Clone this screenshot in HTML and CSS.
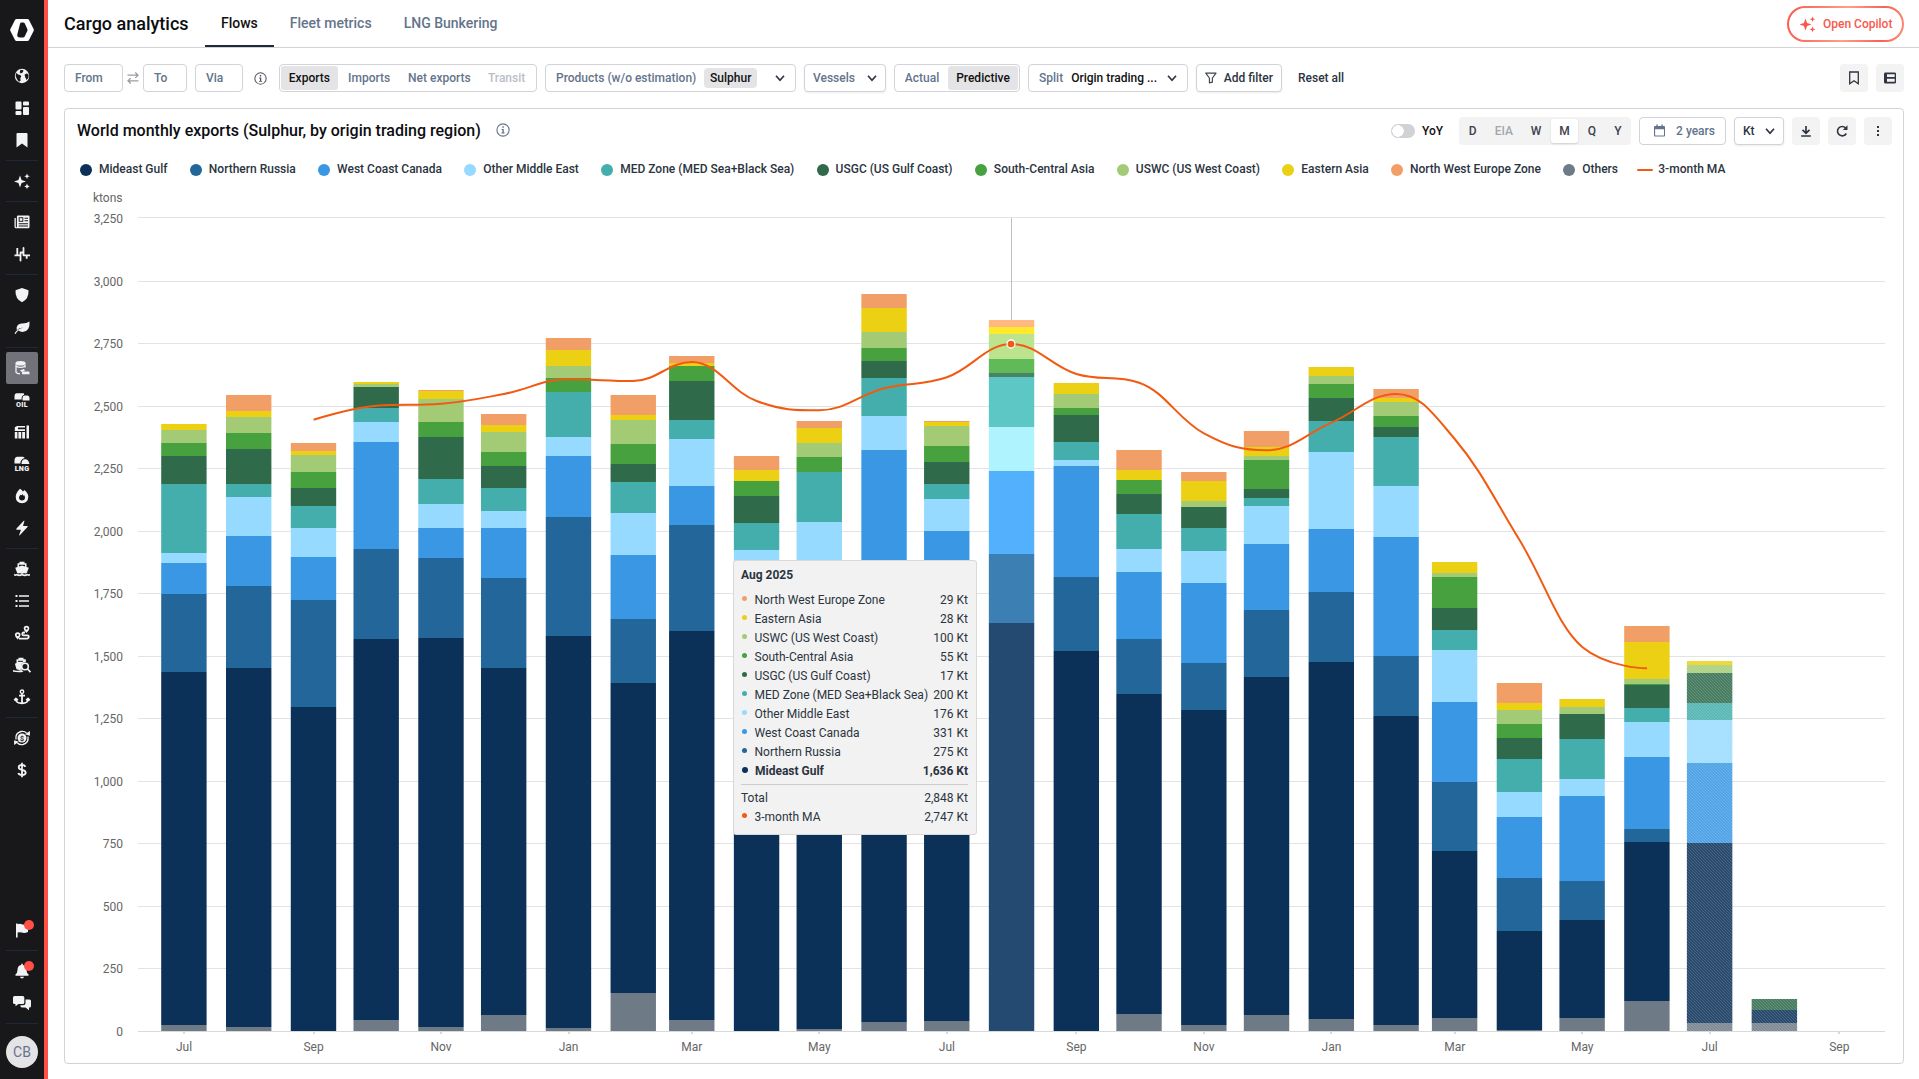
FILE: index.html
```html
<!DOCTYPE html>
<html lang="en">
<head>
<meta charset="utf-8">
<title>Cargo analytics</title>
<link rel="stylesheet" href="styles.css">
</head>
<body>
<svg class="sprite" aria-hidden="true">
  <symbol id="i-chevron" viewBox="0 0 10 10"><path d="M1 2.8 5 7.2 9 2.8" fill="none" stroke="currentColor" stroke-width="1.7"/></symbol>
  <symbol id="i-info" viewBox="0 0 14 14"><circle cx="7" cy="7" r="6.100" fill="none" stroke="currentColor" stroke-width="1.1"/><path d="M6.300 3.300h1.500v1.500H6.300zM5.600 6h2.200v3.600h.8v1H5.400v-1h1V7h-.8z" fill="currentColor"/></symbol>
  <symbol id="i-sparkles" viewBox="0 0 16 16"><path d="M6 2.6 7.6 6.9 12 8.5 7.6 10.1 6 14.4 4.4 10.1 0 8.5 4.4 6.9zM13 .4l.8 2 2 .8-2 .8-.8 2-.8-2-2-.8 2-.8zM13 10.6l.8 2 2 .8-2 .8-.8 2-.8-2-2-.8 2-.8z" fill="currentColor"/></symbol>
</svg>
<div class="app">
  <nav class="side">
    <a class="logo"><svg width="24" height="22" viewBox="0 0 24 22"><path fill="#fff" fill-rule="evenodd" d="M6.500 0H17.500Q18.500 0 19 .9L23.600 9.900Q24.100 11 23.600 12.100L19 21.100Q18.500 22 17.500 22H6.500Q5.500 22 5 21.100L.4 12.100Q-.1 11 .4 9.900L5 .9Q5.500 0 6.500 0zM11.500 3.500Q10.500 3.500 10.100 4.500L7.300 15.500Q7 16.800 7.800 17.700 8.500 18.500 9.500 18.500H13Q14.200 18.500 14.700 17.500L17.300 12Q17.700 11 17.300 10L14.800 4.500Q14.300 3.500 13.200 3.500z"/></svg></a>
    <a class="item"><svg class="ic" viewBox="0 0 16 16"><circle cx="8" cy="8" r="7.200"/><path class="cut" d="M2.300 4.800 4 6.500l2.300.4 1 1.500-1 1.600.3 2.800-1.700 1L3 11.300 1.600 8zM6.500 1.800l3 .5-.6 1.900-2 1.300-1.200-1.200zM10.500 6.800l2.500-1.500 1.700 2-.4 2.800-1.700 1.800-1.300-2.400z"/></svg></a>
    <a class="item"><svg class="ic" viewBox="0 0 16 16"><rect x="1.500" y="1.500" width="6" height="8" rx="1"/><rect x="9" y="1.500" width="6" height="4" rx="1"/><rect x="1.500" y="11" width="6" height="4" rx="1"/><rect x="9" y="7" width="6" height="8" rx="1"/></svg></a>
    <a class="item"><svg class="ic" viewBox="0 0 16 16"><path d="M2.500 2Q2.500 1 3.500 1h9q1 0 1 1v13.500L8 11.500l-5.500 4z"/></svg></a>
    <hr>
    <a class="item"><svg class="ic"><use href="#i-sparkles"/></svg></a>
    <hr>
    <a class="item"><svg class="ic" viewBox="0 0 16 16"><path d="M4 1.500h10.500q1 0 1 1V13q0 1.200-1.200 1.200H2Q.5 14.200.5 12.700V4H1.800v8.700q0 .5.500.5t.600-.5V2.500q0-1 1.100-1z"/><path class="cut" d="M4.700 3.300h4.600v4.500H4.700zM10.500 3.800H14v1h-3.500zM10.500 6.300H14v1h-3.500zM4.700 9.300H14v.9H4.700zM4.700 11.600H14v.9H4.700z"/><path d="M5.600 4.200h2.800v2.600H5.600z"/></svg></a>
    <a class="item"><svg class="ic" viewBox="0 0 16 16"><path class="ln" d="M.5 9.300H4M3.300 9.600V2M3.300 9.300h3.200v5.200V6.500h3V2v7.300h3.200v3.500M12.700 9.300H16"/></svg></a>
    <hr>
    <a class="item"><svg class="ic" viewBox="0 0 16 16"><path d="M8 1l6.500 2.300Q15 12 8 15.300 1 12 1.500 3.300z"/></svg></a>
    <a class="item"><svg class="ic" viewBox="0 0 16 16"><path d="M15.500 2.500Q16.300 12.500 8.500 13 6 13 4.500 11.600 2.500 13 1.700 15L.5 14.500Q2.500 10 9.500 8.500 5 8.500 2.800 11 1.500 5.500 7.300 4.400 12.500 4.600 15.500 2.500z"/></svg></a>
    <hr>
    <a class="item active"><svg class="ic" viewBox="0 0 16 16"><ellipse cx="6.500" cy="3.300" rx="5" ry="2.300"/><path class="ln thin" d="M2 4.500V12.300q1 1.300 4 1.500M11 4.500V7.500M2.200 6.300q4.300 2 8.600 0"/><path d="M6 10.300l4-1.300 1 1.500-3.500 1.500zM8 12.500q0-1 1-1h5.500q1 0 1 1v1.800H8z"/></svg></a>
    <a class="item"><svg class="ic" viewBox="0 0 16 16"><path d="M2.500 1.300h7.300l.4 1.500Q8 3.300 7.600 5.500V7.500H.5V4Q.5 1.300 2.500 1.300zM10.500 3.500h3Q15.500 3.500 15.500 6v2.500H8.500V6Q8.500 3.500 10.500 3.500z"/><text x="8" y="15.300" class="ict">OIL</text></svg></a>
    <a class="item"><svg class="ic" viewBox="0 0 16 16"><path d="M.8 3.300 3 2h8v1.500H4v1.700h7V7H.8zM.8 8h2.600v6.500H.8zM4.400 8h2.800v6.500H4.400zM8.200 8H11v6.500H8.200zM12.500 1.500H15v13h-2.500z"/></svg></a>
    <a class="item"><svg class="ic" viewBox="0 0 16 16"><path d="M3.500 .8h5.500q1.200.2 1.700 1.200Q6.500 3 6.300 7.500H.5V4.500Q.5 1 3.500.8zM7.500 8Q7.500 3.500 11 3.300T15.500 8z"/><text x="8" y="15.300" class="ict">LNG</text></svg></a>
    <a class="item"><svg class="ic" viewBox="0 0 16 16"><path fill-rule="evenodd" d="M6 .8Q8 2 9 3.600L10.500 2Q14.500 5.500 14.300 9 14 15 8 15.200 2 15 1.700 9 1.700 5 6 .8zM8.500 6Q7.500 8 6.500 6.800 5 8.300 5 9.800 5.200 12.500 8 12.500T11 9.800Q11 8 10 7L9.500 8z"/></svg></a>
    <a class="item"><svg class="ic" viewBox="0 0 16 16"><path d="M10.500.8 9 6h4.300q.8.300.2 1L5.800 15.300q-.8.300-.6-.6L7 9.700H2.700q-.8-.3-.2-1.100L9.800.8z"/></svg></a>
    <hr>
    <a class="item"><svg class="ic" viewBox="0 0 16 16"><path d="M5.500.8h5v1.400h2V6l2.300.8-2 5.200q-1.500 1-2.400 0-2.400 1.400-4.800 0-.9 1-2.400 0l-2-5.200L3.500 6V2.200h2zM0 12.800q1.500 1 2.700 0 2.600 1.500 5.300 0 2.700 1.500 5.300 0 1.200 1 2.700 0v1.700q-1.500.8-2.700 0-2.600 1.300-5.300 0-2.700 1.300-5.300 0-1.200.8-2.700 0z"/><path class="cut" d="M5 3.800h6v1.600L8 4.600 5 5.400z"/></svg></a>
    <a class="item"><svg class="ic" viewBox="0 0 16 16"><path d="M1.500 2h2v2h-2zM1.500 7h2v2h-2zM1.500 12h2v2h-2zM5 2.300h10v1.500H5zM5 7.300h10v1.500H5zM5 12.300h10v1.500H5z"/></svg></a>
    <a class="item"><svg class="ic" viewBox="0 0 16 16"><path fill-rule="evenodd" d="M12.500.8Q15.300.8 15.300 3.500 15.300 5 12.500 8 9.700 5 9.700 3.500 9.700.8 12.500.8zM12.500 2.400a1.100 1.100 0 1 0 .1 0zM3.700 7.300q2.800 0 2.800 2.700 0 1.500-2.800 4.500Q.9 11.500.9 10 .9 7.300 3.700 7.300zM3.700 8.900a1.100 1.100 0 1 0 .1 0z"/><path class="ln" d="M11 7.500H9.800Q8.300 7.500 8.300 9t1.500 1.300h3.500q1.500 0 1.500 1.500t-1.500 1.800H5"/></svg></a>
    <a class="item"><svg class="ic wide" viewBox="0 0 18 16"><path d="M5.500.8h5v1.400h2.300V5Q7.500 5.500 8 10l1.500 2.500-3 .5-3-.8-1.600-5.400L3.500 6V2.200h2zM0 13q4 1.500 8.500 0l2 1.500-2 .7Q4 15.500 0 14.800z"/><path class="cut" d="M5 3.800h5v1H5z"/><circle cx="12" cy="9.500" r="3.300" fill="none" stroke="#f2f3f5" stroke-width="1.600"/><path class="ln" d="m14.500 12 3 3.200"/></svg></a>
    <a class="item"><svg class="ic" viewBox="0 0 16 16"><circle cx="8" cy="2.700" r="1.700" fill="none" stroke="#f2f3f5" stroke-width="1.400"/><path class="ln" d="M8 4.400V14M5 6.700h6M1.500 10q.5 4.300 6.500 4.300t6.500-4.300M.3 11.500l1.500-2 2 1.700M15.700 11.500l-1.500-2-2 1.700"/></svg></a>
    <hr>
    <a class="item"><svg class="ic" viewBox="0 0 16 16"><circle cx="8" cy="8" r="4.500"/><path class="ln thin" d="M2 9.500Q1 3 7 1.500q3.500-.6 5.500 1.500M14 6.500Q15 13 9 14.500q-3.500.6-5.500-1.500"/><path d="M11 4.300 15.900 1v4.800zM5 11.700.1 15v-4.800z"/><text x="8" y="10.700" class="coin">$</text></svg></a>
    <a class="item"><svg class="ic" viewBox="0 0 16 16"><path class="ln" d="M8 .8v14.400M11.500 4.700Q10.500 3 8 3 4.700 3 4.700 5.300q0 2 3.300 2.600 3.700.6 3.700 2.900Q11.700 13 8 13q-3 0-3.700-2"/></svg></a>
    <div class="grow"></div>
    <a class="item"><svg class="ic" viewBox="0 0 16 16"><path d="M2 1.500h1.600v.7q2-1 4.300 0T12.500 2q1-.3 1.500.5V10q-3.500 1.500-6.300.5-2.200-.7-4.100 0v5H2z"/></svg><i class="badge"></i></a>
    <hr>
    <a class="item"><svg class="ic" viewBox="0 0 16 16"><path d="M7.200.8h1.600v1.100q3.700.6 3.700 5 0 3 2 4.300v1.600h-13v-1.600q2-1.300 2-4.300 0-4.400 3.700-5zM6 13.700h4q-.3 1.700-2 1.700t-2-1.700z"/></svg><i class="badge"></i></a>
    <a class="item"><svg class="ic wide" viewBox="0 0 18 16"><path d="M1.500 1h8.300q1.500 0 1.500 1.500v5q0 1.500-1.500 1.500H5.500L2.500 11.300V9h-1Q0 9 0 7.500v-5Q0 1 1.500 1zM12.500 4.500h4q1.500 0 1.500 1.500v5q0 1.500-1.500 1.500H16v2.700l-3.500-2.700H9Q7.300 12.500 7.300 10.300H10q2.500 0 2.500-2.500z"/></svg></a>
    <hr>
    <span class="avatar">CB</span>
  </nav>

  <main>
    <header class="top">
      <h1>Cargo analytics</h1>
      <a class="tab on">Flows</a><a class="tab">Fleet metrics</a><a class="tab">LNG Bunkering</a>
      <button class="copilot"><svg width="17" height="16"><use href="#i-sparkles"/></svg>Open Copilot</button>
    </header>

    <div class="filters">
      <div class="box from">From</div>
      <svg class="swap" viewBox="0 0 12 12"><path d="M.5 3.200H11M8.300.5 11 3.200 8.300 5.900M11.500 8.800H1M3.700 6.100 1 8.800l2.700 2.700" fill="none" stroke="#9a9da3" stroke-width="1.300"/></svg>
      <div class="box to">To</div>
      <div class="box via">Via</div>
      <svg class="info"><use href="#i-info"/></svg>
      <div class="seg mode"><b>Exports</b><span>Imports</span><span>Net exports</span><span class="off">Transit</span></div>
      <div class="box products">Products (w/o estimation)<em>Sulphur</em><svg class="chev"><use href="#i-chevron"/></svg></div>
      <div class="box vessels sh">Vessels<svg class="chev"><use href="#i-chevron"/></svg></div>
      <div class="seg pred"><span>Actual</span><b>Predictive</b></div>
      <div class="box split">Split<strong>Origin trading ...</strong><svg class="chev"><use href="#i-chevron"/></svg></div>
      <div class="box addf sh"><svg width="12" height="12" viewBox="0 0 12 12"><path d="M.8 1h10.400L7.500 6v4.200L4.500 11V6z" fill="none" stroke="#3f4650" stroke-width="1.200" stroke-linejoin="round"/></svg>Add filter</div>
      <span class="reset">Reset all</span>
      <div class="sq first"><svg viewBox="0 0 12 14"><path d="M1.700 1h8.600v11.700L6 9.800l-4.300 2.900z" fill="none" stroke="#2f3540" stroke-width="1.300"/></svg></div>
      <div class="sq"><svg viewBox="0 0 12 14"><path fill-rule="evenodd" d="M1.500 1.500h9q1.500 0 1.500 1.300v8.400q0 1.300-1.500 1.300h-9Q0 12.500 0 11.200V2.800Q0 1.500 1.500 1.500zM3 3.300v2.800h7.700V3.300zM3 7.700v3h7.700v-3z" fill="#2f3540"/></svg></div>
    </div>

    <section class="card">
      <div class="head">
        <h2>World monthly exports (Sulphur, by origin trading region)</h2>
        <svg class="info"><use href="#i-info"/></svg>
        <i class="toggle"></i><span class="yoy">YoY</span>
        <div class="gran"><span>D</span><span class="off">EIA</span><span>W</span><b>M</b><span>Q</span><span>Y</span></div>
        <div class="box date"><svg width="12" height="14" viewBox="0 0 12 14"><path fill-rule="evenodd" d="M2.500 0H4v1.600h4V0h1.500v1.600H11q1 0 1 1V12q0 1-1 1H1q-1 0-1-1V2.600q0-1 1-1h1.500zM1.200 5v6.800h9.600V5z" fill="#64748b"/></svg>2 years</div>
        <div class="box kt sh">Kt<svg class="chev"><use href="#i-chevron"/></svg></div>
        <div class="sq"><svg viewBox="0 0 12 14"><path d="M6 2v7M2.500 5.800 6 9.300l3.500-3.500M1.200 12h9.600" fill="none" stroke="#2f3540" stroke-width="1.700"/></svg></div>
        <div class="sq"><svg viewBox="0 0 12 14"><path d="M10.300 9.500A4.700 4.700 0 1 1 9.700 4" fill="none" stroke="#2f3540" stroke-width="1.600"/><path d="M11.500 1.300V6H6.800z" fill="#2f3540"/></svg></div>
        <div class="sq"><svg viewBox="0 0 12 14"><path d="M5 2h2v2H5zM5 6h2v2H5zM5 10h2v2H5z" fill="#2f3540"/></svg></div>
      </div>
      <ul class="legend" id="legend"></ul>
      <div class="plot">
        <svg id="chart" width="1838" height="882" viewBox="65 181 1838 882"></svg>
        <div class="tip">
          <h3>Aug 2025</h3>
          <div id="tiprows"></div>
          <div class="sum"><p>Total<span>2,848 Kt</span></p><p><i class="ma"></i>3-month MA<span>2,747 Kt</span></p></div>
        </div>
      </div>
    </section>
  </main>
</div>
<script src="chart.js"></script>
</body>
</html>
```
FILE: styles.css
```css
* { box-sizing: border-box; }
body { margin: 0; background: #fff; color: #2b3440; font: 500 12px/16px Roboto, sans-serif; overflow: hidden; }
h1, h2, h3, p, ul { margin: 0; padding: 0; }
h1, h2 { font-weight: 500; }
.sprite { position: absolute; width: 0; height: 0; }
.app { display: flex; height: 1079px; }

.side { width: 48px; flex: none; background: #18181b; border-right: 4px solid #ff4f47; display: flex; flex-direction: column; padding: 19px 6px 11px; }
.logo { height: 41px; padding-left: 4px; }
.logo svg { display: block; margin-left: -.5px; }
.item { height: 32px; width: 32px; flex: none; display: flex; align-items: center; justify-content: center; border-radius: 2px; position: relative; color: #f2f3f5; }
.item.active { background: #72727b; }
.side hr { width: 32px; height: 1px; flex: none; border: 0; background: #1e2a3b; margin: 4px 0; }
.ic { width: 16px; height: 16px; fill: #f2f3f5; overflow: visible; }
.ic.wide { width: 18px; }
.ic .cut { fill: #18181b; }
.ic .ln { fill: none; stroke: #f2f3f5; stroke-width: 1.800; stroke-linejoin: round; }
.ic .thin { stroke-width: 1.300; }
.ict { font: 900 7.200px Roboto, sans-serif; text-anchor: middle; letter-spacing: .3px; }
.coin { font: 700 7px Roboto, sans-serif; text-anchor: middle; fill: #18181b; }
.grow { flex: 1; }
.badge { position: absolute; right: 4px; top: 6px; width: 10px; height: 10px; border-radius: 50%; background: #ff4f47; }
.avatar { width: 32px; height: 32px; flex: none; margin-top: 8px; border-radius: 50%; background: #e4e4e7; color: #64748b; font: 400 14px/32px Roboto, sans-serif; text-align: center; }

main { flex: 1; min-width: 0; }
.top { height: 48px; border-bottom: 1px solid #d2d3d7; padding: 0 15px 0 16px; display: flex; align-items: center; }
h1 { font-size: 18px; line-height: 24px; color: #0c0d10; margin-right: 16px; width: 125px; white-space: nowrap; }
.tab { height: 47px; padding: 0 16px; font-size: 14px; line-height: 47px; color: #64748b; }
.tab.on { color: #111; border-bottom: 2px solid #1e293b; }
.copilot { margin-left: auto; width: 117px; height: 36px; margin-top: 1px; border: 2px solid transparent; border-radius: 18px; background: linear-gradient(#fff, #fff) padding-box, linear-gradient(100deg, #f9594f, #ff9f83 50%, #f86257 80%, #ff8b74) border-box; color: #f9584e; font: 500 12px Roboto, sans-serif; display: flex; align-items: center; padding: 0 0 0 10px; gap: 7px; white-space: nowrap; }

.filters { height: 60px; display: flex; align-items: center; padding: 0 15px 0 16px; color: #64748b; }
.box { height: 28px; border: 1px solid #d2d3d7; border-radius: 4px; background: #fff; display: flex; align-items: center; padding: 0 10px; white-space: nowrap; flex: none; }
.sh { box-shadow: 0 1px 2px rgba(0, 0, 0, .08); }
.chev { width: 10px; height: 10px; margin-left: auto; color: #2f3540; }
.from { width: 59px; }
.swap { width: 12px; height: 12px; margin: 0 4px 0 4px; }
.to { width: 44px; }
.via { width: 48px; margin-left: 8px; }
.info { width: 14px; height: 14px; color: #4b525c; flex: none; }
.filters .info { width: 13px; height: 13px; margin: 0 12px 0 11px; }
.seg { height: 28px; border: 1px solid #d2d3d7; border-radius: 4px; display: flex; padding: 1px; line-height: 24px; flex: none; white-space: nowrap; }
.seg b { background: #e4e4e7; border-radius: 3px; color: #111; font-weight: 500; text-align: center; }
.seg span { text-align: center; }
.seg .off { color: #b9bec6; }
.mode { width: 258px; }
.mode > :nth-child(1) { width: 57px; }
.mode > :nth-child(2) { width: 63px; }
.mode > :nth-child(3) { width: 78px; }
.mode > :nth-child(4) { width: 57px; }
.products { width: 251px; margin-left: 8px; padding-right: 10px; }
.products em { font-style: normal; background: #e4e4e7; border-radius: 4px; color: #111; height: 20px; line-height: 20px; width: 53px; text-align: center; margin-left: 8px; }
.vessels { width: 82px; margin-left: 8px; padding: 0 8px; }
.pred { width: 126px; margin-left: 8px; }
.pred span { width: 52px; }
.pred b { flex: 1; }
.split { width: 160px; margin-left: 8px; }
.split strong { font-weight: 500; color: #111; margin-left: 8px; }
.addf { width: 86px; margin-left: 8px; padding: 0 8px; color: #2b3440; gap: 7px; }
.reset { margin-left: 16px; color: #2b3440; }
.sq { width: 28px; height: 28px; flex: none; border-radius: 4px; background: #f3f3f4; display: flex; align-items: center; justify-content: center; margin-left: 8px; }
.sq svg { width: 12px; height: 14px; }
.sq.first { margin-left: auto; }

.card { margin: 0 15px 0 16px; height: 956px; border: 1px solid #d2d3d7; border-radius: 4px; display: flex; flex-direction: column; }
.head { height: 44px; flex: none; display: flex; align-items: center; padding: 0 11px 0 12px; }
h2 { font-size: 16px; line-height: 20px; color: #0c0d10; margin-right: 15px; white-space: nowrap; }
.head > .info { margin-top: -3px; color: #64748b; }
.toggle { margin-left: auto; width: 24px; height: 14px; border-radius: 7px; background: radial-gradient(circle at 7px 7px, #fff 5.500px, transparent 6px) #d1d1d6; }
.yoy { margin: 0 16px 0 7px; color: #111; width: 21px; }
.gran { width: 172px; height: 28px; background: #f3f3f4; border-radius: 4px; display: flex; align-items: center; color: #3b424d; }
.gran > * { text-align: center; flex: none; font-weight: 500; }
.gran .off { width: 34.500px; color: #a4a7ad; }
.gran > :nth-child(1) { width: 27.500px; }
.gran > :nth-child(3) { width: 30px; }
.gran b { width: 27px; height: 24px; line-height: 24px; background: #fff; border-radius: 3px; box-shadow: 0 1px 2px rgba(0, 0, 0, .15); }
.gran > :nth-child(5) { width: 28px; }
.gran > :nth-child(6) { width: 24px; }
.date { width: 87px; margin-left: 8px; color: #64748b; padding-left: 14px; gap: 11px; }
.kt { width: 50px; margin-left: 8px; padding: 0 8px; color: #2b3440; }

.legend { height: 28px; flex: none; list-style: none; display: flex; padding: 8px 0 0 15px; gap: 22.300px; line-height: 17px; align-items: flex-start; }
.legend li { display: flex; align-items: center; gap: 7px; white-space: nowrap; }
.legend i { width: 12px; height: 12px; border-radius: 50%; }
.legend i.dash { width: 16px; height: 2px; border-radius: 1px; background: #f15a10; margin: 0 -2px 0 -3px; }
.plot { position: relative; flex: 1; }
#chart { display: block; font: 400 12px Roboto, sans-serif; fill: #666; }
.end { text-anchor: end; }
.mid { text-anchor: middle; }

.tip { position: absolute; left: 668px; top: 379px; width: 244px; height: 275px; background: #f2f2f2; border: 1px solid #d9d9d9; border-radius: 3px; padding: 6px 8px 0 7px; font-weight: 400; }
.tip h3 { font-weight: 700; font-size: 12px; line-height: 16px; margin-bottom: 7px; }
.tip p { display: flex; align-items: center; height: 19px; white-space: nowrap; }
.tip p i { width: 5px; height: 5px; border-radius: 50%; margin: 0 7.500px 3px 1px; }
.tip p span { margin-left: auto; }
.tip p.cur { font-weight: 700; }
.tip p.cur i { width: 6px; height: 6px; margin: 0 7px 2px 1px; }
.tip .ma { background: #f15a10; }
.sum { border-top: 1px solid #ccc; margin-top: 4px; padding-top: 3px; }
```
FILE: chart.js
```js
const series = [
  ['North West Europe Zone', '#F29F67', '29'], ['Eastern Asia', '#EBD014', '28'],
  ['USWC (US West Coast)', '#A3CB75', '100'], ['South-Central Asia', '#48A13F', '55'],
  ['USGC (US Gulf Coast)', '#2F6B4B', '17'], ['MED Zone (MED Sea+Black Sea)', '#44AEAC', '200'],
  ['Other Middle East', '#96DAFF', '176'], ['West Coast Canada', '#3A97E3', '331'],
  ['Northern Russia', '#22669A', '275'], ['Mideast Gulf', '#0B3158', '1,636'], ['Others', '#6E7B87']
];
const BASE = 1031;
// Top edge of every stacked segment, in the order of `series`; 0 = no segment.
const bars = [
  [0,424,430,443,456,484,553,563,594,672,1025],
  [395,411,417,433,449,484,497,536,586,668,1027],
  [443,451,455,472,488,506,528,557,600,707,0],
  [0,382,384,0,387,408,422,442,549,639,1020],
  [390,391,399,422,437,479,504,528,558,638,1027],
  [414,425,432,452,466,488,511,528,578,668,1015],
  [338,350,366,378,0,392,437,456,517,636,1028],
  [395,415,420,444,464,482,513,555,619,683,993],
  [356,363,0,366,381,420,439,486,525,631,1020],
  [456,470,0,481,496,523,550,590,640,700,0],
  [421,428,443,457,0,472,522,600,650,710,1029],
  [294,308,332,348,361,378,416,450,580,650,1022],
  [421,422,426,446,462,484,499,531,600,680,1021],
  [320,327,334,359,373,377,427,471,554,623,0],
  [0,383,394,408,415,442,460,466,577,651,0],
  [450,470,0,480,494,514,549,572,639,694,1014],
  [472,481,501,0,507,528,551,583,663,710,1025],
  [431,447,456,460,489,498,506,544,610,677,1015],
  [0,367,376,384,398,421,452,529,592,662,1019],
  [389,398,402,416,427,437,486,537,656,716,1025],
  [0,562,573,577,608,630,650,702,782,851,1018],
  [683,703,710,724,738,759,792,817,878,931,1030],
  [0,699,707,0,714,739,779,796,881,920,1018],
  [626,642,679,684,685,708,722,757,829,842,1001],
  [0,661,665,0,673,703,720,763,0,843,1023],
  [0,0,0,0,999,0,0,0,0,1010,1023]
];
const average = [419.7,405.7,403.7,394,379.3,381,362,401,410.3,388.3,377.3,344,374,382.7,433.3,450.3,422.7,394,439,540,647,668.3];
const gridRows = [217,281,343,406,468,531,593,656,718,781,843,906,968];
const DAY = 864e5, start = Date.UTC(2024, 6, 1);
const monthX = m => 184 + 2.09 * (Date.UTC(2024, 6 + m, 1) - start) / DAY;
const lighten = c => '#' + [1, 3, 5].map(k => Math.min(255, parseInt(c.substr(k, 2), 16) + 25).toString(16).padStart(2, '0')).join('');

let s = '<defs><pattern id="hatch" width="3" height="3" patternUnits="userSpaceOnUse"><rect width="3" height="3" fill="#fff" fill-opacity=".12"/><path d="M-1-1 4 4M-1 2 1 4M2-1 4 1" stroke="#fff" stroke-opacity=".17" stroke-width=".9"/></pattern></defs>';
s += '<text class="end" x="122.500" y="202">ktons</text>';
gridRows.forEach((y, k) => {
  s += `<rect x="138" y="${y}" width="1747" height="1" fill="#e3e3e5"/><text class="end" x="123" y="${k ? y + 5 : 223}">${(3250 - 250 * k).toLocaleString('en-US')}</text>`;
});
s += '<text class="end" x="123" y="1036">0</text>';
s += '<rect x="1011" y="218" width="1" height="110" fill="#bfbfbf"/>';
bars.forEach((tops, m) => {
  const x = (monthX(m) - 22.8).toFixed(2);
  let bottom = BASE;
  for (let k = 10; k >= 0; k--) {
    if (!tops[k]) continue;
    const col = m === 13 ? lighten(series[k][1]) : series[k][1];
    s += `<rect x="${x}" y="${tops[k]}" width="45.400" height="${bottom - tops[k]}" fill="${col}"/>`;
    bottom = tops[k];
  }
  if (m > 23) s += `<rect x="${x}" y="${bottom}" width="45.400" height="${BASE - bottom}" fill="url(#hatch)"/>`;
});
s += '<rect x="138" y="1031" width="1747" height="1" fill="#d9d9dc"/>';
['Jul', 'Sep', 'Nov', 'Jan', 'Mar', 'May', 'Jul', 'Sep', 'Nov', 'Jan', 'Mar', 'May', 'Jul', 'Sep'].forEach((t, k) => {
  const x = monthX(2 * k);
  s += `<rect x="${Math.round(x) - 1}" y="1032" width="2" height="2" fill="#d9d9dc"/><text class="mid" x="${x}" y="1051">${t}</text>`;
});

// Smoothed line whose control points never overshoot their neighbours.
const pts = average.map((y, k) => [monthX(k + 2), y]);
let d = `M${pts[0]}`, prev = pts[0];
for (let k = 1; k < pts.length; k++) {
  const p = pts[k], a = pts[k - 1], b = pts[k + 1];
  let left = p, right = p;
  if (b) {
    const lx = (1.5 * p[0] + a[0]) / 2.5, rx = (1.5 * p[0] + b[0]) / 2.5;
    let ly = (1.5 * p[1] + a[1]) / 2.5, ry = (1.5 * p[1] + b[1]) / 2.5;
    const fix = (ry - ly) * (rx - p[0]) / (rx - lx) + p[1] - ry;
    ly += fix; ry += fix;
    if (ly > a[1] && ly > p[1]) { ly = Math.max(a[1], p[1]); ry = 2 * p[1] - ly; }
    else if (ly < a[1] && ly < p[1]) { ly = Math.min(a[1], p[1]); ry = 2 * p[1] - ly; }
    if (ry > b[1] && ry > p[1]) { ry = Math.max(b[1], p[1]); ly = 2 * p[1] - ry; }
    else if (ry < b[1] && ry < p[1]) { ry = Math.min(b[1], p[1]); ly = 2 * p[1] - ry; }
    left = [lx, ly]; right = [rx, ry];
  }
  d += `C${prev} ${left} ${p}`;
  prev = right;
}
s += `<path d="${d}" fill="none" stroke="#F15A10" stroke-width="2" stroke-linejoin="round"/>`;
s += '<circle cx="1011" cy="344" r="4" fill="#F15A10" stroke="#fff" stroke-width="1.300"/>';
document.getElementById('chart').innerHTML = s;

const order = [9, 8, 7, 6, 5, 4, 3, 2, 1, 0, 10];
document.getElementById('legend').innerHTML = order.map(k => `<li><i style="background:${series[k][1]}"></i>${series[k][0]}</li>`).join('') + '<li><i class="dash"></i>3-month MA</li>';
document.getElementById('tiprows').innerHTML = series.slice(0, 10).map((r, k) => `<p${k === 9 ? ' class="cur"' : ''}><i style="background:${r[1]}"></i>${r[0]}<span>${r[2]} Kt</span></p>`).join('');
```
